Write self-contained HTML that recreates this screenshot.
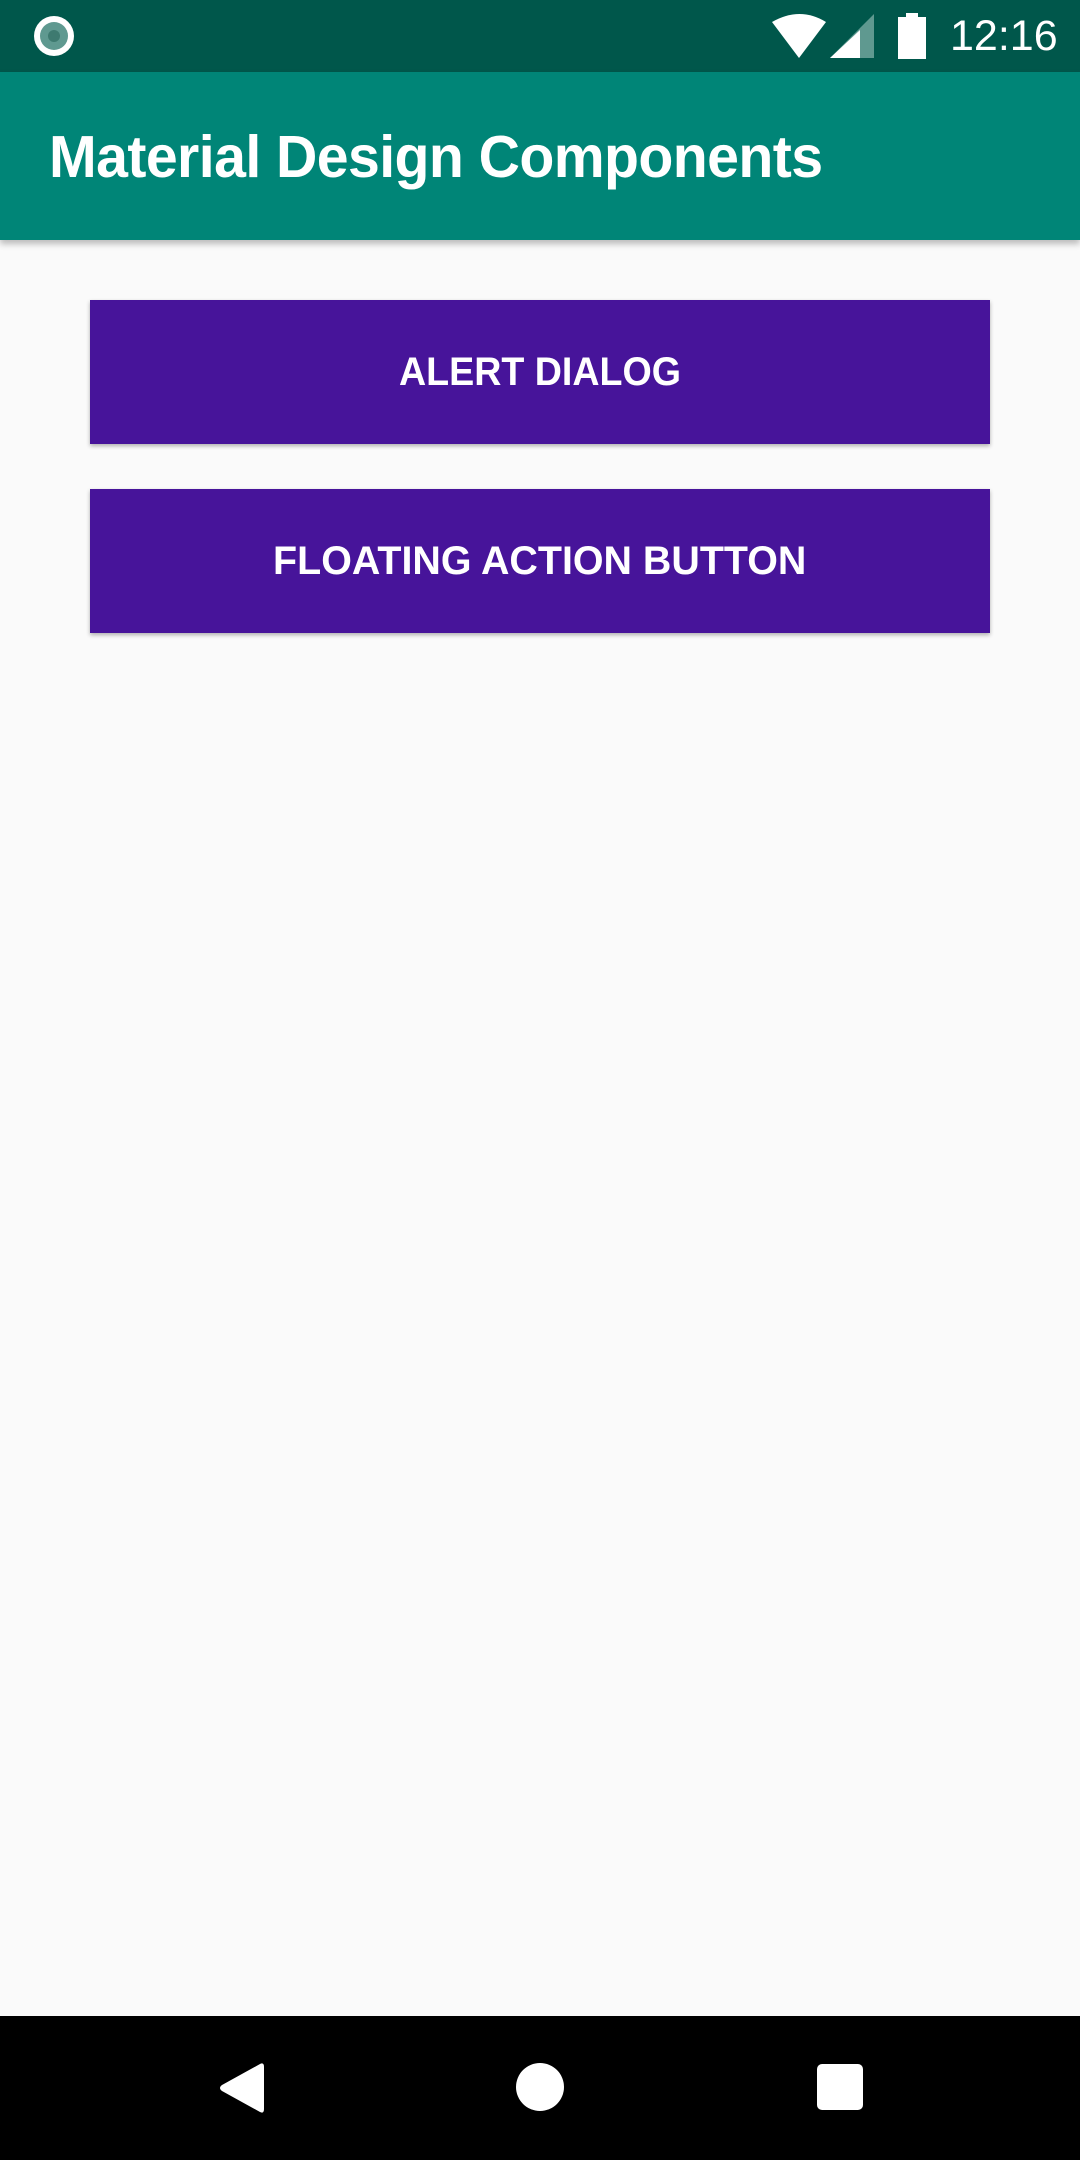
<!DOCTYPE html>
<html><head><meta charset="utf-8"><style>
*{margin:0;padding:0;box-sizing:border-box}
body{width:1080px;height:2160px;background:#fafafa;font-family:"Liberation Sans",sans-serif;position:relative;overflow:hidden}
.sb{position:absolute;left:0;top:0;width:1080px;height:72px;background:#00574b}
.ab{position:absolute;left:0;top:72px;width:1080px;height:168px;background:#008577;box-shadow:0 4px 6px rgba(0,0,0,.25)}
.title{position:absolute;left:49px;top:50px;color:#fff;font-size:59px;line-height:70px;letter-spacing:-0.6px;font-weight:bold;transform:scaleX(0.97);transform-origin:left;white-space:nowrap}
.btn{position:absolute;left:90px;width:900px;height:144px;background:#47149a;color:#fff;font-size:40px;font-weight:bold;display:flex;align-items:center;justify-content:center;box-shadow:0 2px 4px rgba(0,0,0,.3)}
.btn span{display:inline-block;white-space:nowrap}
.nav{position:absolute;left:0;top:2016px;width:1080px;height:144px;background:#000}
.time{position:absolute;left:950px;top:14px;color:#fff;font-size:43px;line-height:44px}
</style></head><body>
<div class="sb">
<svg style="position:absolute;left:32px;top:14px" width="44" height="44" viewBox="0 0 44 44"><circle cx="22" cy="22" r="20" fill="#fff"/><circle cx="22" cy="22" r="14" fill="#5f9990"/><circle cx="22" cy="22" r="6" fill="#3e7a70"/></svg>
<svg style="position:absolute;left:770px;top:14px" width="60" height="46" viewBox="0 0 60 46"><path d="M2 8 Q30 -8 56 8 L29 44 Z" fill="#fff"/></svg>
<svg style="position:absolute;left:830px;top:14px" width="46" height="46" viewBox="0 0 46 46"><path d="M44 0 V44 H0 Z" fill="#5f9990"/><path d="M30 16 V44 H0 L30 16Z" fill="#fff"/></svg>
<svg style="position:absolute;left:898px;top:13px" width="30" height="46" viewBox="0 0 30 46"><rect x="8" y="0" width="12" height="5" fill="#fff"/><rect x="0" y="4" width="28" height="42" fill="#fff"/></svg>
<div class="time">12:16</div>
</div>
<div class="ab"><div class="title">Material Design Components</div></div>
<div class="btn" style="top:300px"><span style="transform:scaleX(0.94)">ALERT DIALOG</span></div>
<div class="btn" style="top:489px"><span style="transform:scaleX(0.985)">FLOATING ACTION BUTTON</span></div>
<div class="nav">
<svg style="position:absolute;left:216px;top:44px" width="50" height="56" viewBox="0 0 50 56"><path d="M44 4 Q48 2 48 7 V49 Q48 54 44 52 L6 31 Q2 28 6 25 Z" fill="#fff"/></svg>
<svg style="position:absolute;left:515px;top:46px" width="50" height="50"><circle cx="25" cy="25" r="24" fill="#fff"/></svg>
<svg style="position:absolute;left:817px;top:48px" width="46" height="46"><rect x="0" y="0" width="46" height="46" rx="5" fill="#fff"/></svg>
</div>
</body></html>
